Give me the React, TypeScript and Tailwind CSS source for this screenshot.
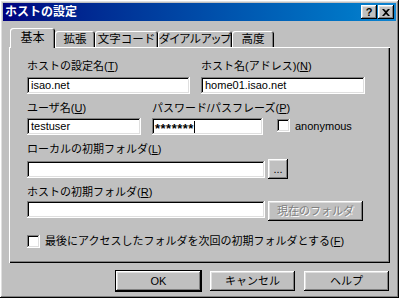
import React from 'react';

// Win98-style "ホストの設定" dialog (FFFTP host settings, 基本 tab)

const raised =
  'bg-[#c0c0c0] shadow-[inset_-1px_-1px_#000,inset_1px_1px_#fff,inset_-2px_-2px_#808080,inset_2px_2px_#dfdfdf]';
const sunken =
  'bg-white shadow-[inset_-1px_-1px_#fff,inset_1px_1px_#808080,inset_-2px_-2px_#dfdfdf,inset_2px_2px_#000]';

function Label({ text, mn }: { text: string; mn: string }) {
  return (
    <div className="h-[13px] leading-[13px] whitespace-nowrap">
      {text}(<u>{mn}</u>)
    </div>
  );
}

function Field({ value, className = '' }: { value?: string; className?: string }) {
  return (
    <div className={`${sunken} h-[17px] pl-[4px] leading-[17px] whitespace-nowrap ${className}`}>
      {value}
    </div>
  );
}

function Check() {
  return <div className={`${sunken} h-[13px] w-[13px] shrink-0`} />;
}

function Tab({ label, w, active, tight }: { label: string; w: string; active?: boolean; tight?: boolean }) {
  return (
    <div
      className={`${w} ${active ? 'z-10 -mb-px h-[20px] pt-[3px] text-[12px]' : 'h-[16px] pt-[1px] text-[11.5px]'} ${
        tight ? "[font-feature-settings:'palt']" : ''
      } flex items-start justify-center whitespace-nowrap rounded-t-[3px] bg-[#c0c0c0] leading-[14px] shadow-[inset_1px_1px_#fff,inset_-1px_0_#000,inset_-2px_0_#808080]`}
    >
      {label}
    </div>
  );
}

function Btn({ label, def }: { label: string; def?: boolean }) {
  return (
    <div className={def ? 'border border-black' : 'p-px'}>
      <div className={`${raised} flex h-[20px] w-[85px] items-center justify-center`}>{label}</div>
    </div>
  );
}

export default function App() {
  return (
    <div
      className="h-[298px] w-[399px] bg-[#c0c0c0] text-[11px] text-black"
      style={{ fontFamily: '"Liberation Sans", "Noto Sans CJK JP", sans-serif' }}
    >
      <div className={`${raised} flex h-full w-full flex-col p-[3px]`}>
        {/* title bar */}
        <div className="flex h-[18px] items-center justify-between bg-gradient-to-r from-[#000080] to-[#1084d0] pl-[2px] pr-[2px]">
          <span className="text-[12px] font-bold leading-none text-white">ホストの設定</span>
          <div className="flex gap-[1px]">
            <div className={`${raised} flex h-[14px] w-[16px] items-center justify-center text-[11px] font-bold leading-none`}>
              ?
            </div>
            <div className={`${raised} flex h-[14px] w-[16px] items-center justify-center`}>
              <svg width="8" height="7" viewBox="0 0 8 7" aria-hidden>
                <path d="M0 0h2l2 2 2-2h2L5 3.5 8 7H6L4 5 2 7H0l3-3.5z" fill="#000" />
              </svg>
            </div>
          </div>
        </div>

        {/* tabs */}
        <div className="ml-[7px] mt-[7px] flex h-[19px] items-end">
          <Tab label="基本" w="w-[45px]" active />
          <Tab label="拡張" w="w-[40px]" />
          <Tab label="文字コード" w="w-[63px]" />
          <Tab label="ダイアルアップ" w="w-[74px]" tight />
          <Tab label="高度" w="w-[42px]" />
        </div>

        {/* panel */}
        <div className="ml-[6px] flex h-[216px] w-[381px] flex-col pl-[18px] pt-[13px] shadow-[inset_1px_1px_#fff,inset_-1px_-1px_#000,inset_-2px_-2px_#808080]">
          <div className="flex gap-[11px]">
            <div className="flex w-[163px] flex-col gap-[4px]">
              <Label text="ホストの設定名" mn="T" />
              <Field value="isao.net" />
            </div>
            <div className="flex w-[164px] flex-col gap-[4px]">
              <Label text="ホスト名(アドレス)" mn="N" />
              <Field value="home01.isao.net" />
            </div>
          </div>

          <div className="mt-[8px] flex items-end gap-[11px]">
            <div className="flex w-[114px] flex-col gap-[3px]">
              <Label text="ユーザ名" mn="U" />
              <Field value="testuser" />
            </div>
            <div className="flex w-[111px] flex-col gap-[3px]">
              <Label text="パスワード/パスフレーズ" mn="P" />
              <div className={`${sunken} flex h-[17px] items-center pl-[3px]`}>
                <span className="pt-[4px] text-[13px] font-bold leading-none tracking-[0.5px]">*******</span>
                <span className="h-[12px] w-px bg-black" />
              </div>
            </div>
            <div className="mb-[1px] ml-[3px] flex items-center gap-[5px]">
              <Check />
              <span>anonymous</span>
            </div>
          </div>

          <div className="mt-[8px] flex flex-col gap-[3px]">
            <Label text="ローカルの初期フォルダ" mn="L" />
            <div className="flex items-center gap-[3px]">
              <Field className="w-[238px]" />
              <div className={`${raised} flex h-[20px] w-[20px] items-center justify-center leading-none`}>...</div>
            </div>
          </div>

          <div className="mt-[7px] flex flex-col gap-[2px]">
            <Label text="ホストの初期フォルダ" mn="R" />
            <div className="flex items-start gap-[3px]">
              <Field className="w-[238px]" />
              <div
                className={`${raised} flex h-[20px] w-[95px] items-center justify-center text-[#808080] [text-shadow:1px_1px_#fff]`}
              >
                現在のフォルダ
              </div>
            </div>
          </div>

          <div className="mt-[12px] flex items-center gap-[5px]">
            <Check />
            <span className="whitespace-nowrap">
              最後にアクセスしたフォルダを次回の初期フォルダとする(<u>F</u>)
            </span>
          </div>
        </div>

        {/* buttons */}
        <div className="mr-[6px] mt-[7px] flex justify-end gap-[7px]">
          <Btn label="OK" def />
          <Btn label="キャンセル" />
          <Btn label="ヘルプ" />
        </div>
      </div>
    </div>
  );
}
